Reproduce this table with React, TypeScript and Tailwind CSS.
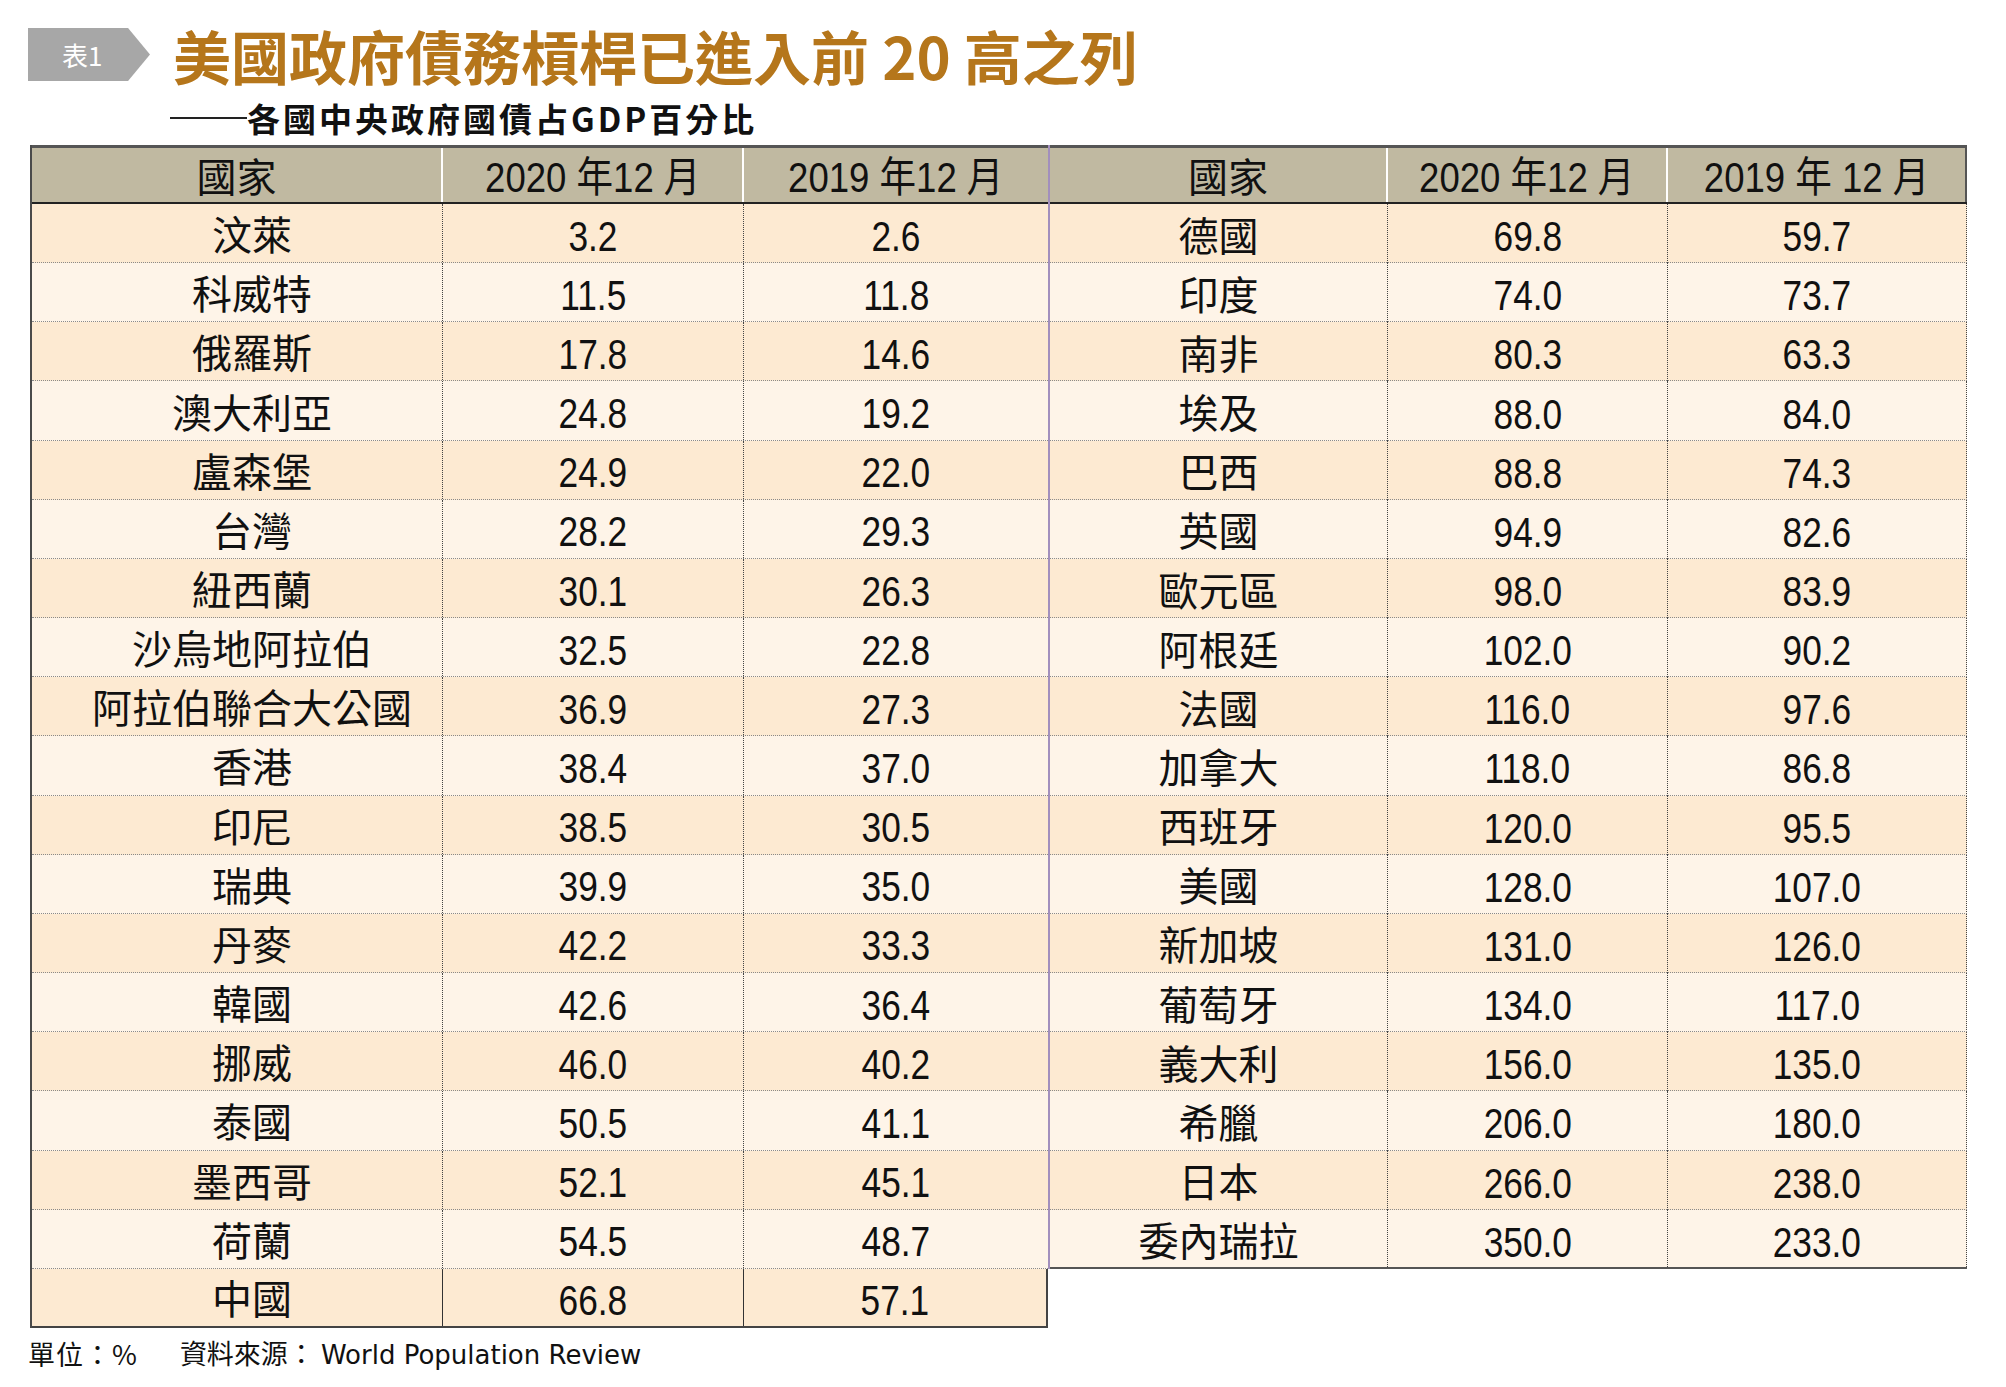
// App.tsx — 表1 美國政府債務槓桿 table

const LEFT_ROWS: [string, string, string][] = [
  ["汶萊", "3.2", "2.6"],
  ["科威特", "11.5", "11.8"],
  ["俄羅斯", "17.8", "14.6"],
  ["澳大利亞", "24.8", "19.2"],
  ["盧森堡", "24.9", "22.0"],
  ["台灣", "28.2", "29.3"],
  ["紐西蘭", "30.1", "26.3"],
  ["沙烏地阿拉伯", "32.5", "22.8"],
  ["阿拉伯聯合大公國", "36.9", "27.3"],
  ["香港", "38.4", "37.0"],
  ["印尼", "38.5", "30.5"],
  ["瑞典", "39.9", "35.0"],
  ["丹麥", "42.2", "33.3"],
  ["韓國", "42.6", "36.4"],
  ["挪威", "46.0", "40.2"],
  ["泰國", "50.5", "41.1"],
  ["墨西哥", "52.1", "45.1"],
  ["荷蘭", "54.5", "48.7"],
  ["中國", "66.8", "57.1"],
];

const RIGHT_ROWS: [string, string, string][] = [
  ["德國", "69.8", "59.7"],
  ["印度", "74.0", "73.7"],
  ["南非", "80.3", "63.3"],
  ["埃及", "88.0", "84.0"],
  ["巴西", "88.8", "74.3"],
  ["英國", "94.9", "82.6"],
  ["歐元區", "98.0", "83.9"],
  ["阿根廷", "102.0", "90.2"],
  ["法國", "116.0", "97.6"],
  ["加拿大", "118.0", "86.8"],
  ["西班牙", "120.0", "95.5"],
  ["美國", "128.0", "107.0"],
  ["新加坡", "131.0", "126.0"],
  ["葡萄牙", "134.0", "117.0"],
  ["義大利", "156.0", "135.0"],
  ["希臘", "206.0", "180.0"],
  ["日本", "266.0", "238.0"],
  ["委內瑞拉", "350.0", "233.0"],
];

const CJK = "font-['Noto_Sans_CJK_TC',sans-serif]";

const rowBg = (i: number) => (i % 2 === 0 ? "bg-[#fdead2]" : "bg-[#fef4e8]");

// condensed numerals: no narrow face installed, so squeeze Liberation Sans
function Num({ children }: { children: string }) {
  return (
    <span className="inline-block translate-y-[3px] scale-x-[0.82] text-[43px] leading-none font-['Liberation_Sans',sans-serif]">
      {children}
    </span>
  );
}

function HeadDate({ children }: { children: string }) {
  return (
    <span className="inline-block translate-y-[3px] scale-x-[0.87] whitespace-nowrap text-[42px] leading-none font-['Liberation_Sans','Noto_Sans_CJK_TC',sans-serif]">
      {children}
    </span>
  );
}

function LeftTable() {
  return (
    <div className="w-[1018px] border-l-2 border-[#4a4a4a]">
      {/* Header */}
      <div className="flex h-[59px] bg-[#c0b9a1] border-t-[3px] border-b-2 border-t-[#555] border-b-[#222] text-[#111]">
        <div className={`w-[411px] flex items-center justify-center border-r-2 border-white text-[40px] leading-none ${CJK}`}>國家</div>
        <div className="w-[301px] flex items-center justify-center border-r-2 border-white">
          <HeadDate>2020 年12 月</HeadDate>
        </div>
        <div className="w-[304px] flex items-center justify-center">
          <HeadDate>2019 年12 月</HeadDate>
        </div>
      </div>

      {LEFT_ROWS.map(([name, a, b], i) => {
        const last = i === LEFT_ROWS.length - 1;
        return (
          <div
            key={name}
            className={[
              "flex h-[59.16px] text-[#111]",
              rowBg(i),
              last ? "border-b-2 border-solid border-[#444]" : "border-b border-dotted border-[#8a8a8a]",
            ].join(" ")}
          >
            <div
              className={[
                "w-[411px] flex items-center justify-center pl-[30px] text-[40px] leading-none",
                CJK,
                last ? "border-r border-solid border-[#333]" : "border-r border-dotted border-[#444]",
              ].join(" ")}
            >
              {name}
            </div>
            <div
              className={[
                "w-[301px] flex items-center justify-center",
                last ? "border-r border-solid border-[#333]" : "border-r border-dotted border-[#444]",
              ].join(" ")}
            >
              <Num>{a}</Num>
            </div>
            <div
              className={[
                "w-[304px] flex items-center justify-center",
                last ? "border-r-2 border-solid border-[#444]" : "",
              ].join(" ")}
            >
              <Num>{b}</Num>
            </div>
          </div>
        );
      })}
    </div>
  );
}

function RightTable() {
  return (
    <div className="w-[919px] border-l-2 border-[#a28fbd]">
      {/* Header */}
      <div className="flex h-[59px] bg-[#c0b9a1] border-t-[3px] border-b-2 border-t-[#555] border-b-[#222] text-[#111]">
        <div className={`w-[338px] flex items-center justify-center pl-[20px] border-r-2 border-white text-[40px] leading-none ${CJK}`}>國家</div>
        <div className="w-[280px] flex items-center justify-center border-r-2 border-white">
          <HeadDate>2020 年12 月</HeadDate>
        </div>
        <div className="w-[299px] flex items-center justify-center border-r-2 border-[#555]">
          <HeadDate>2019 年 12 月</HeadDate>
        </div>
      </div>

      {RIGHT_ROWS.map(([name, a, b], i) => {
        const last = i === RIGHT_ROWS.length - 1;
        return (
          <div key={name} className={`relative flex h-[59.16px] text-[#111] ${rowBg(i)}`}>
            <div className={`w-[338px] flex items-center justify-center text-[40px] leading-none border-r border-dotted border-[#444] ${CJK}`}>
              {name}
            </div>
            <div className="w-[280px] flex items-center justify-center border-r border-dotted border-[#444]">
              <Num>{a}</Num>
            </div>
            <div className="w-[299px] flex items-center justify-center border-r border-dotted border-[#444]">
              <Num>{b}</Num>
            </div>
            {/* row separator */}
            <div
              className={
                last
                  ? "absolute left-0 right-0 bottom-0 h-0 border-b-2 border-solid border-[#555]"
                  : "absolute left-0 right-0 bottom-0 h-0 border-b border-dotted border-[#8a8a8a]"
              }
            />
          </div>
        );
      })}
    </div>
  );
}

export default function App() {
  return (
    <div className="w-[2006px] h-[1387px] bg-white overflow-hidden">
      {/* Title row */}
      <div className="flex items-center h-[53px] mt-[28px] ml-[28px]">
        <div className="w-[122px] h-[53px] bg-[#a7a7a7] [clip-path:polygon(0_0,82%_0,100%_50%,82%_100%,0_100%)] flex items-center pl-[34px]">
          <span className={`text-white text-[26px] leading-none ${CJK}`}>表1</span>
        </div>
        <h1 className={`ml-[23px] text-[58px] leading-none font-bold text-[#b5761b] whitespace-nowrap ${CJK}`}>
          美國政府債務槓桿已進入前 20 高之列
        </h1>
      </div>

      {/* Subtitle */}
      <div className="flex items-center h-[36px] mt-[19px] ml-[170px]">
        <span className="w-[77px] h-[2px] bg-[#222]" />
        <span className={`text-[33px] leading-none font-bold tracking-[3px] text-[#111] ${CJK}`}>
          各國中央政府國債占GDP百分比
        </span>
      </div>

      {/* Table */}
      <div className="flex items-start mt-[9px] ml-[30px]">
        <LeftTable />
        <RightTable />
      </div>

      {/* Footer */}
      <div className={`flex items-center mt-[10px] ml-[28px] text-[27px] leading-[30px] text-[#111] ${CJK}`}>
        <span className="tracking-[1px]">單位：%</span>
        <span className="ml-[42px]">
          資料來源：<span className="ml-[6px] text-[26px] font-['DejaVu_Sans',sans-serif]">World Population Review</span>
        </span>
      </div>
    </div>
  );
}
